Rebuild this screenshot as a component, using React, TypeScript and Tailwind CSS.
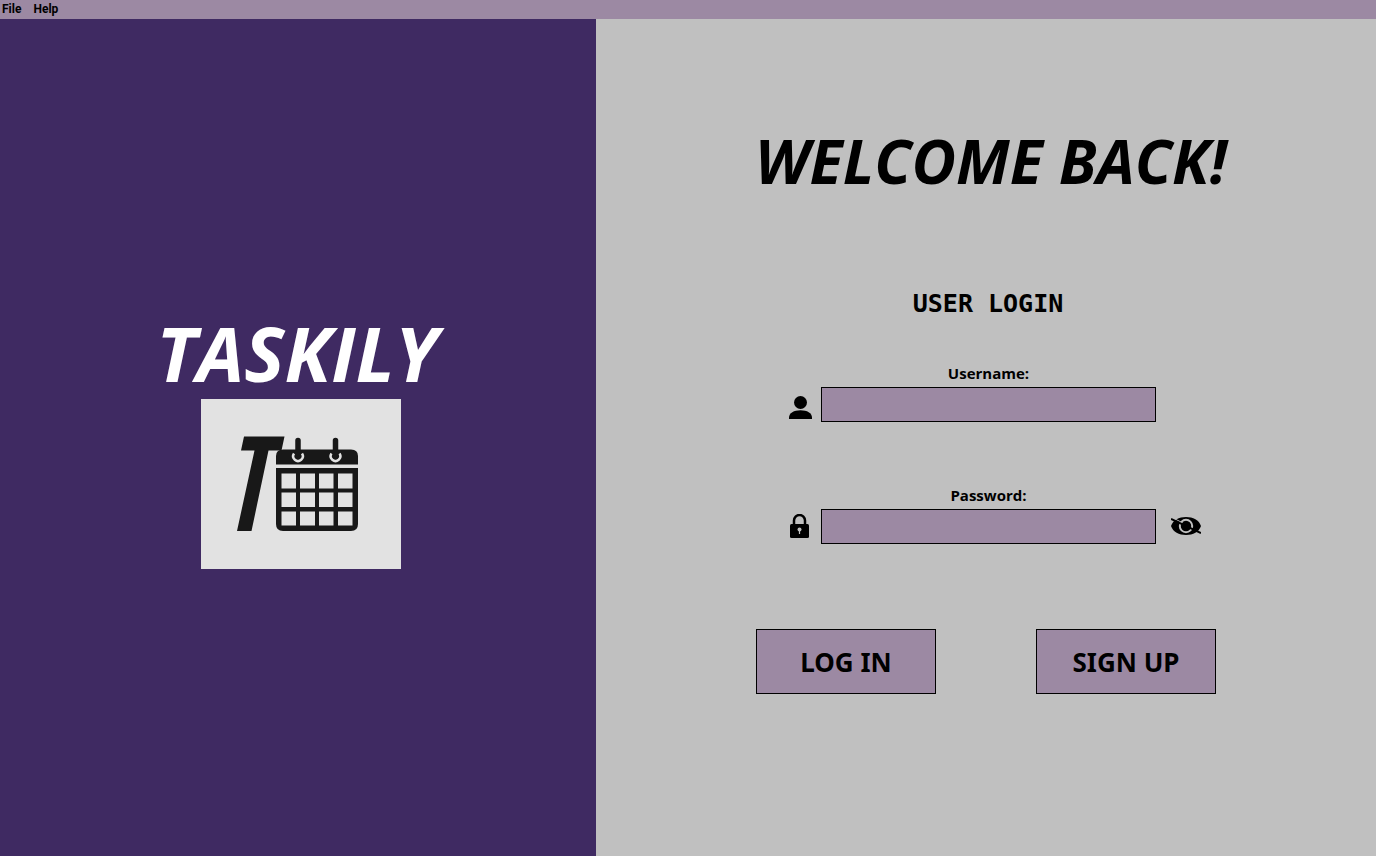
import React, { useState } from "react";

function Logo() {
  return (
    <svg viewBox="0 0 200 170" className="block h-[170px] w-[200px] bg-[#e2e2e2]" role="img" aria-label="Taskily logo">
      <g fill="#181818">
        <path d="M43 37.500H83.500L80.500 51.500H67.500L50.500 132H36L53.500 51.500H40Z" />
        <path d="M75 65.500V57Q75 50.500 82 50.500H150Q157 50.500 157 57V65.500Z" />
        <path
          fillRule="evenodd"
          d="M75 69H157V125Q157 132 150 132H82Q75 132 75 125Z
             M80.500 74.500H95V89.500H80.500Z M99 74.500H114V89.500H99Z M118 74.500H132.500V89.500H118Z M137 74.500H151.500V89.500H137Z
             M80.500 93.500H95V108H80.500Z M99 93.500H114V108H99Z M118 93.500H132.500V108H118Z M137 93.500H151.500V108H137Z
             M80.500 112.500H95V126.500H80.500Z M99 112.500H114V126.500H99Z M118 112.500H132.500V126.500H118Z M137 112.500H151.500V126.500H137Z"
        />
      </g>
      <g fill="none" stroke="#e2e2e2" strokeWidth="2.500">
        <path d="M93 54.500A4.800 4.800 0 1 0 101 54.500" />
        <path d="M130.500 54.500A4.800 4.800 0 1 0 138.500 54.500" />
      </g>
      <path d="M97 41.500V57.500M134.500 41.500V57.500" stroke="#181818" strokeWidth="5.500" strokeLinecap="round" />
    </svg>
  );
}

function UserIcon() {
  return (
    <svg viewBox="0 0 24 24" className="size-6" aria-hidden="true">
      <circle cx="12.500" cy="7.500" r="6.500" />
      <path d="M1 24V22.500C1 18 6 15.200 12.500 15.200S24 18 24 22.500V24Z" />
    </svg>
  );
}

function LockIcon() {
  return (
    <svg viewBox="0 0 24 24" className="size-6" aria-hidden="true">
      <path d="M6 11V6.500A5.500 5.500 0 0 1 17 6.500V11" fill="none" stroke="black" strokeWidth="2.500" />
      <rect x="2" y="10" width="19" height="14" rx="1.500" />
      <circle cx="11.500" cy="15.500" r="2" fill="#c0c0c0" />
      <path d="M11.500 15V20" stroke="#c0c0c0" strokeWidth="1.200" />
    </svg>
  );
}

function EyeOffIcon() {
  return (
    <svg viewBox="0 0 30 20" className="h-5 w-[30px]" aria-hidden="true">
      <path d="M0 10C2 4 8 1 15 1S28 4 30 10C28 16 22 19 15 19S2 16 0 10Z" />
      <circle cx="15" cy="10" r="6.200" fill="none" stroke="#c0c0c0" strokeWidth="2" />
      <path d="M3 2.500L12 7" stroke="#c0c0c0" strokeWidth="1" />
      <circle cx="15" cy="10" r="4.600" />
      <path d="M0 3L30 17" stroke="black" strokeWidth="2" />
    </svg>
  );
}

const rowClass = "grid grid-cols-[56px_335px_45px] items-center gap-x-[9px] gap-y-1";
const labelClass = "col-start-2 text-center text-[15px] leading-5 font-bold";
const inputClass = "h-[35px] w-full border border-black bg-[#9c89a3] px-2 text-base outline-none";
const buttonClass =
  "h-[65px] w-[180px] border border-black bg-[#9c89a3] font-['Noto_Sans',sans-serif] text-[26px] leading-8 font-bold";

export default function App() {
  const [visible, setVisible] = useState(false);

  return (
    <div className="flex min-h-screen flex-col bg-[#c0c0c0] font-['Open_Sans',sans-serif] text-black">
      <nav className="flex h-[19px] items-center gap-3 bg-[#9c89a3] px-0.5 pb-0.5 font-['Roboto',sans-serif] text-xs font-bold">
        <button type="button">File</button>
        <button type="button">Help</button>
      </nav>
      <main className="grid flex-1 grid-cols-[149fr_195fr]">
        <section className="flex flex-col items-center justify-center bg-[#3f2a62] pl-1.5">
          <h1 className="pr-2 text-[76px] leading-[93px] font-[740] text-white italic">TASKILY</h1>
          <Logo />
        </section>
        <section className="flex flex-col items-center pt-[102px]">
          <h2 className="pl-2.5 text-[61px] leading-[80px] font-[740] italic">WELCOME BACK!</h2>
          <form className="mt-[87px] w-[460px]" onSubmit={(e) => e.preventDefault()}>
            <h3 className="pl-1 text-center font-['DejaVu_Sans_Mono',monospace] text-[25px] leading-8 font-bold">
              USER LOGIN
            </h3>
            <div className={`mt-[43px] ${rowClass}`}>
              <label htmlFor="username" className={labelClass}>Username:</label>
              <span className="col-start-1 flex justify-end pt-1"><UserIcon /></span>
              <input id="username" type="text" className={inputClass} />
            </div>
            <div className={`mt-[63px] ${rowClass}`}>
              <label htmlFor="password" className={labelClass}>Password:</label>
              <span className="col-start-1 flex justify-end pb-0.5"><LockIcon /></span>
              <input id="password" type={visible ? "text" : "password"} className={inputClass} />
              <button
                type="button"
                aria-label="Show password"
                className="justify-self-start pb-0.5 pl-1.5"
                onClick={() => setVisible(!visible)}
              >
                <EyeOffIcon />
              </button>
            </div>
            <div className="mt-[85px] flex justify-between">
              <button type="submit" className={buttonClass}>LOG IN</button>
              <button type="button" className={buttonClass}>SIGN UP</button>
            </div>
          </form>
        </section>
      </main>
    </div>
  );
}
